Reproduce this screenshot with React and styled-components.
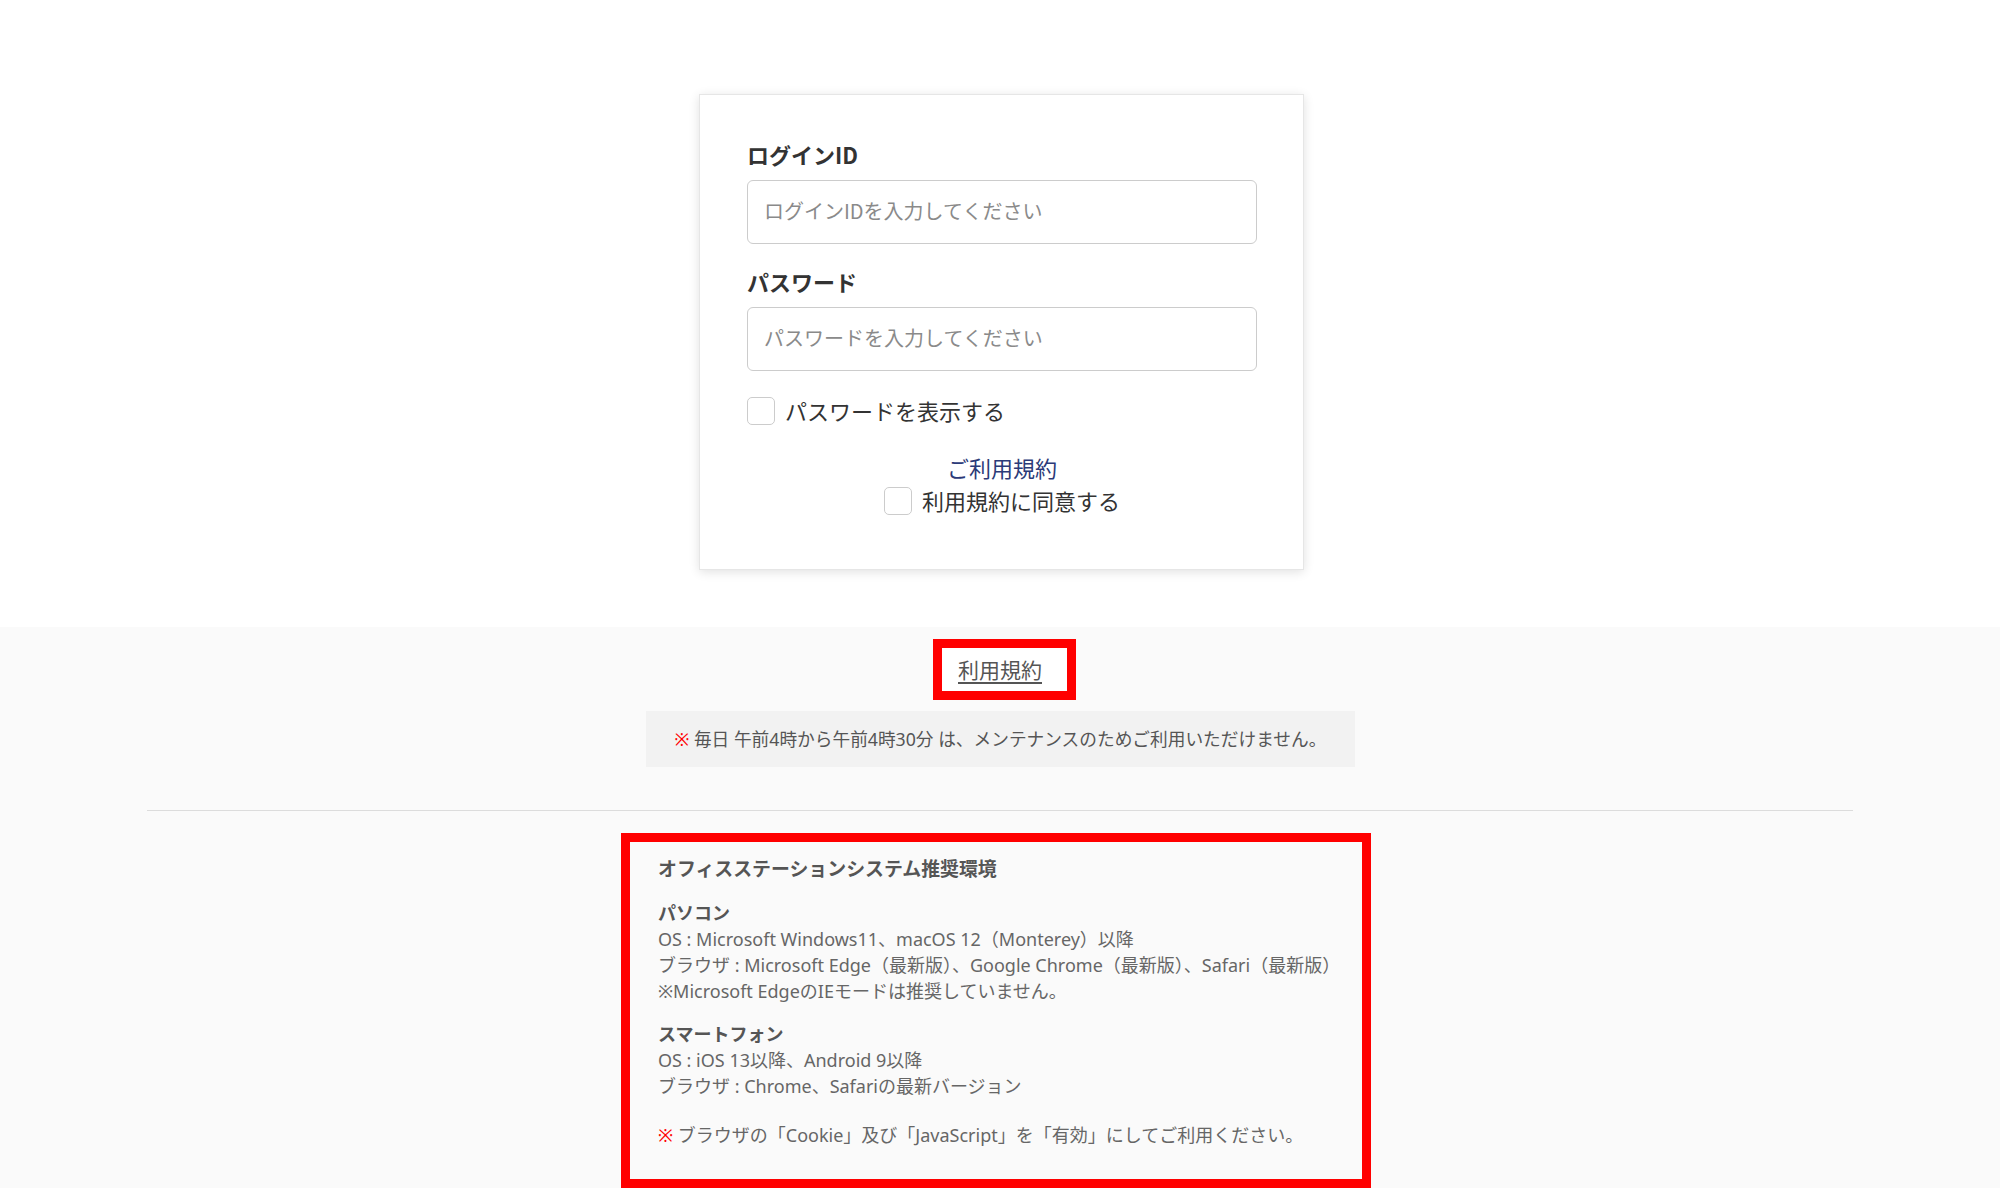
import React from "react";
import styled, { createGlobalStyle } from "styled-components";

const GlobalStyle = createGlobalStyle`
  html, body {
    margin: 0;
    padding: 0;
    background: #fafafa;
    font-family: "Noto Sans CJK JP", "Noto Sans", sans-serif;
    color: #333;
  }
  * {
    box-sizing: border-box;
  }
`;

const LoginArea = styled.section`
  background: #fff;
  padding: 94px 0 57px 3px;
  display: flex;
  justify-content: center;
`;

const Card = styled.form`
  width: 605px;
  background: #fff;
  border: 1px solid #e6e6e6;
  box-shadow: 0 2px 10px rgba(0, 0, 0, 0.12);
  padding: 43px 46px 52px 47px;
`;

const Field = styled.div`
  & + & {
    margin-top: 21px;
  }
`;

const Label = styled.label`
  display: block;
  font-size: 22px;
  line-height: 32px;
  font-weight: 700;
  color: #333;
`;

const TextInput = styled.input`
  display: block;
  width: 100%;
  height: 64px;
  margin-top: 10px;
  padding: 0 16px 3px;
  border: 1px solid #ccc;
  border-radius: 6px;
  font-family: inherit;
  font-size: 20px;
  color: #333;
  outline: none;
  &::placeholder {
    color: #8a8a8a;
  }
`;

const CheckRow = styled.label`
  display: flex;
  justify-content: ${(p) => (p.$center ? "center" : "flex-start")};
  align-items: center;
  gap: 10px;
  margin-top: ${(p) => (p.$center ? "0" : "23px")};
  font-size: 22px;
  line-height: 33px;
  color: #333;
  cursor: pointer;
`;

const Check = styled.input.attrs({ type: "checkbox" })`
  appearance: none;
  width: 28px;
  height: 28px;
  margin: 0;
  border: 1px solid #ccc;
  border-radius: 5px;
  background: #fff;
  flex-shrink: 0;
`;

const Terms = styled.div`
  margin-top: 24px;
  text-align: center;
`;

const TermsTitle = styled.div`
  font-size: 22px;
  line-height: 33px;
  color: #2b3a78;
`;

const Footer = styled.footer`
  background: #fafafa;
  padding: 12px 0 0;
  display: flex;
  flex-direction: column;
  align-items: center;
  font-family: "Noto Sans", "Noto Sans CJK JP", sans-serif;
`;

const Highlight = styled.div`
  border: 9px solid #ff0000;
  background: ${(p) => p.$bg || "#fff"};
`;

const TermsFrame = styled(Highlight)`
  margin-left: 9px;
`;

const TermsLink = styled.a`
  display: block;
  padding: 5px 25px 5px 16px;
  font-family: "Noto Sans CJK JP", sans-serif;
  font-size: 21px;
  line-height: 33px;
  color: #555;
  text-decoration: underline;
  text-underline-offset: 4px;
`;

const Notice = styled.p`
  width: 709px;
  margin: 11px 0 0;
  padding: 0 29px;
  background: #f2f2f2;
  font-size: 17.7px;
  line-height: 56px;
  color: #555;
  white-space: nowrap;
`;

const Mark = styled.span`
  color: #ff0000;
`;

const Divider = styled.hr`
  align-self: stretch;
  margin: 43px 147px 0;
  border: none;
  border-top: 1px solid #dcdcdc;
`;

const EnvFrame = styled(Highlight)`
  width: 750px;
  margin: 22px 0 0;
  transform: translateX(-4px);
  padding: 14px 28px 31px;
  color: #666;
  font-size: 18px;
  line-height: 26px;
`;

const EnvTitle = styled.h3`
  margin: 0;
  font-size: 18.9px;
  line-height: 26px;
  font-weight: 700;
  color: #555;
`;

const EnvBlock = styled.div`
  margin-top: ${(p) => p.$gap}px;
`;

const EnvHead = styled.h4`
  margin: 0;
  font-size: 18px;
  line-height: 26px;
  font-weight: 700;
  color: #555;
`;

const EnvLine = styled.div`
  white-space: nowrap;
`;

export default function App() {
  return (
    <>
      <GlobalStyle />
      <LoginArea>
        <Card onSubmit={(e) => e.preventDefault()}>
          <Field>
            <Label htmlFor="loginId">ログインID</Label>
            <TextInput id="loginId" type="text" placeholder="ログインIDを入力してください" />
          </Field>
          <Field>
            <Label htmlFor="password">パスワード</Label>
            <TextInput id="password" type="password" placeholder="パスワードを入力してください" />
          </Field>
          <CheckRow>
            <Check />
            パスワードを表示する
          </CheckRow>
          <Terms>
            <TermsTitle>ご利用規約</TermsTitle>
            <CheckRow $center>
              <Check />
              利用規約に同意する
            </CheckRow>
          </Terms>
        </Card>
      </LoginArea>

      <Footer>
        <TermsFrame>
          <TermsLink href="#">利用規約</TermsLink>
        </TermsFrame>
        <Notice>
          <Mark>※</Mark> 毎日 午前4時から午前4時30分 は、メンテナンスのためご利用いただけません。
        </Notice>
        <Divider />
        <EnvFrame $bg="#fafafa">
          <EnvTitle>オフィスステーションシステム推奨環境</EnvTitle>
          <EnvBlock $gap={18}>
            <EnvHead>パソコン</EnvHead>
            <EnvLine>OS : Microsoft Windows11、macOS 12（Monterey）以降</EnvLine>
            <EnvLine>ブラウザ : Microsoft Edge（最新版）、Google Chrome（最新版）、Safari（最新版）</EnvLine>
            <EnvLine>※Microsoft EdgeのIEモードは推奨していません。</EnvLine>
          </EnvBlock>
          <EnvBlock $gap={17}>
            <EnvHead>スマートフォン</EnvHead>
            <EnvLine>OS : iOS 13以降、Android 9以降</EnvLine>
            <EnvLine>ブラウザ : Chrome、Safariの最新バージョン</EnvLine>
          </EnvBlock>
          <EnvBlock $gap={23}>
            <EnvLine>
              <Mark>※</Mark> ブラウザの「Cookie」及び「JavaScript」を「有効」にしてご利用ください。
            </EnvLine>
          </EnvBlock>
        </EnvFrame>
      </Footer>
    </>
  );
}
